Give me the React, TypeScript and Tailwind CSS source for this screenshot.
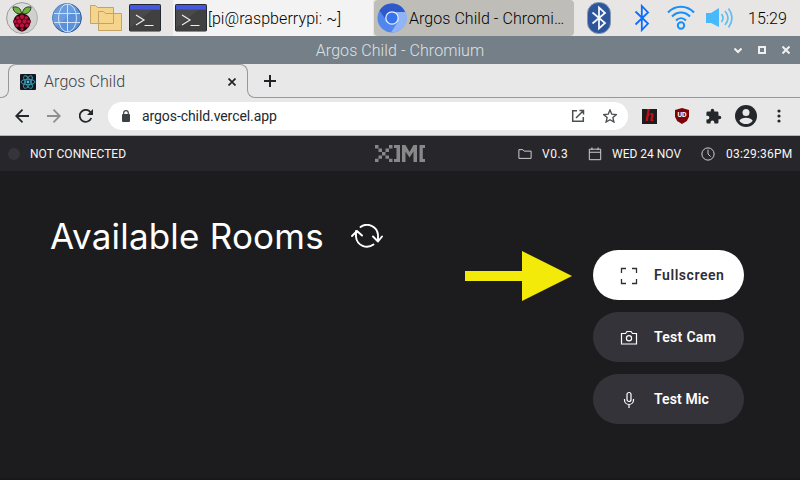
import type { ReactNode } from "react";

function Raspberry() {
  const drupes: [number, number, number][] = [
    [16, 14.8, 2.5], [11.8, 16, 2.1], [20.2, 16, 2.1], [9.4, 19.6, 2], [22.6, 19.6, 2],
    [13.4, 19.4, 2.5], [18.6, 19.4, 2.5], [11, 23.4, 2.1], [21, 23.4, 2.1], [16, 23.6, 2.5], [16, 27.3, 1.7],
  ];
  return (
    <svg className="block size-8" viewBox="0 0 32 32">
      <circle cx="16" cy="16" r="15.4" fill="#dcdddd" stroke="#999b9b" />
      <path d="M27 5A15 15 0 0 1 6 27Z" fill="#c6c8c8" opacity=".6" />
      <path d="M15.600 11.800C10.500 12.500 7 9.500 7 5c4.500-.5 8 .8 8.600 6.800M16.400 11.800C21.500 12.500 25 9.500 25 5c-4.500-.5-8 .8-8.600 6.800" fill="#6cb33e" stroke="#1b2a12" strokeWidth=".9" />
      <path d="M16 11.500c5 0 8.500 4 8.500 8S20 29.500 16 29.500 7.500 23.500 7.500 19.500s3.500-8 8.500-8" fill="#200609" />
      {drupes.map(([x, y, r]) => <circle key={`${x}-${y}`} cx={x} cy={y} r={r} fill="#c01040" stroke="#31040f" strokeWidth=".5" />)}
    </svg>
  );
}

function Globe() {
  return (
    <svg className="block size-[30px]" viewBox="0 0 30 30">
      <circle cx="15" cy="15" r="14.400" fill="#5b91d8" stroke="#315c91" />
      <path d="M4 24 25 5A14 14 0 0 0 4 24" fill="#77a5e2" opacity=".6" />
      <g fill="none" stroke="#d2e0f3" strokeWidth="1">
        <path d="M15.500 1v28M2 10.500h26M2 19.500h26" />
        <ellipse cx="15.500" cy="15" rx="9" ry="14" />
      </g>
    </svg>
  );
}

function Folders() {
  return (
    <svg className="block h-7 w-8" viewBox="0 0 32 28" fill="#f4d58b" stroke="#c5a367">
      <path d="M.5 1.500h5l2 2h16v16H.5zM8.500 7.500h5l2 2h16v17h-23z" />
    </svg>
  );
}

function Terminal() {
  return (
    <svg className="block h-7 w-8" viewBox="0 0 32 28">
      <rect x=".5" y=".5" width="31" height="26.500" rx=".8" fill="#4a4a4a" stroke="#242832" />
      <path d="M1 27V24L23 6h8v21z" fill="#404040" />
      <path d="M1 1h30v4.500H1z" fill="#4458df" />
      <path d="m7 11 8 5-8 5M15.500 21.500h9" fill="none" stroke="#eee" strokeWidth="1.200" />
    </svg>
  );
}

function Chromium() {
  return (
    <svg className="block size-[30px]" viewBox="0 0 30 30">
      <circle cx="15" cy="15" r="14.500" fill="#5086ed" />
      <path d="M2.500 7.500A14.500 14.500 0 0 1 28.500 10H15l-6 7z" fill="#3059c8" />
      <path d="M15 9h13.500A14.500 14.500 0 0 1 14 29.500l7-11z" fill="#91b3f8" />
      <circle cx="15" cy="15" r="6.200" fill="#3873eb" stroke="#e9f0ff" strokeWidth="1.300" />
    </svg>
  );
}

const RUNE = "M1.500 7.500 14 19.500 7.800 26V2L14 8.500 1.500 20.500";

function Bluetooth() {
  return <svg className="block h-7 w-4" viewBox="0 0 16 28"><path d={RUNE} fill="none" stroke="#0b6cff" strokeWidth="1.800" /></svg>;
}

function BluetoothBadge() {
  return (
    <svg className="block h-8 w-6" viewBox="0 0 24 32">
      <rect x=".5" y=".5" width="23" height="31" rx="11" fill="#2d559b" stroke="#8795ad" />
      <path d="M5.500 10.500 18 21l-6 5.500v-21L18 11 5.500 21.500" fill="none" stroke="#f4f6fa" strokeWidth="1.800" />
    </svg>
  );
}

function Wifi() {
  return (
    <svg className="block h-[26px] w-7" viewBox="0 0 28 26" fill="none" stroke="#168ffb" strokeWidth="2">
      <path d="M1 7.500C8-.3 20-.3 27 7.500M5 11.500c5-5.500 13-5.500 18 0M9 15.500c3-3 7-3 10 0" />
      <circle cx="14" cy="20.500" r="3.200" />
    </svg>
  );
}

function Volume() {
  return (
    <svg className="block h-6 w-[27px]" viewBox="0 0 27 24">
      <path d="M0 7h5l8-5v19l-8-4H0z" fill="#48b9fa" />
      <path d="M15.500 8q3 4 0 8M19 5q6 7 0 14M22.500 2.500q7 9.500 0 19" fill="none" stroke="#5cc0f6" strokeWidth="1.700" />
    </svg>
  );
}

function ReactMark() {
  return (
    <svg className="block size-4" viewBox="0 0 16 16">
      <rect width="16" height="16" rx="1" fill="#15181c" />
      <g fill="none" stroke="#3ba1bd" strokeWidth=".9">
        <ellipse cx="8" cy="8" rx="7" ry="2.700" />
        <ellipse cx="8" cy="8" rx="7" ry="2.700" transform="rotate(60 8 8)" />
        <ellipse cx="8" cy="8" rx="7" ry="2.700" transform="rotate(120 8 8)" />
      </g>
      <circle cx="8" cy="8" r="1.400" fill="#48c0df" />
    </svg>
  );
}

/* The logo is a bitmap mark drawn on a coarse cell grid. */
function Logo() {
  return (
    <svg className="block h-[17px] w-[50px]" viewBox="0 0 50 17" fill="#88888b">
      <path d="M0 0h3.500v3.500H0zM14 0h3.500v3.500H14zM3.500 3.500H7V7H3.500zM10.500 3.500H14V7h-3.500zM7 7h3.500v3.500H7zM3.500 10.500H7v3.300H3.500zM10.500 10.500H14v3.300h-3.500zM0 13.800h3.500V17H0zM14 13.800h3.500V17H14z" />
      <path d="M19 0h6v17h-6v-3h2.500V3H19zM27 0h3.500l4 7 4-7H42v17h-3.500V6.500l-4 6-4-6V17H27zM44.500 0H50v3h-2.200v11H50v3h-5.500z" />
    </svg>
  );
}

function Line({ size, children, w = 1.1 }: { size: string; children: ReactNode; w?: number }) {
  return <svg className={`block shrink-0 ${size}`} viewBox="0 0 16 16" fill="none" stroke="currentColor" strokeWidth={w}>{children}</svg>;
}

function TaskBar() {
  return (
    <div className="flex h-9 items-center bg-[#e8e6e4] font-['Roboto',sans-serif] text-[16px] font-light text-black">
      <div className="ml-1.5"><Raspberry /></div>
      <div className="ml-3.5"><Globe /></div>
      <div className="ml-2"><Folders /></div>
      <div className="ml-[7px]"><Terminal /></div>
      <div className="ml-3 flex h-9 w-[200px] items-center gap-px bg-[#f3f3f3] pl-0.5">
        <Terminal />
        <span className="mt-0.5 whitespace-nowrap tracking-[0.07px]">[pi@raspberrypi: ~]</span>
      </div>
      <div className="ml-px flex h-9 w-[200px] items-center gap-0.5 rounded-sm bg-[#bfbdb8] pl-[3px]">
        <Chromium />
        <span className="mt-0.5 whitespace-nowrap tracking-[0.05px]">Argos Child - Chromi…</span>
      </div>
      <div className="ml-[13px]"><BluetoothBadge /></div>
      <div className="ml-[23px]"><Bluetooth /></div>
      <div className="ml-[17px]"><Wifi /></div>
      <div className="ml-[11px]"><Volume /></div>
      <span className="mt-0.5 ml-[15px]">15:29</span>
    </div>
  );
}

function TitleBar() {
  return (
    <div className="grid h-7 grid-cols-[1fr_auto_1fr] items-center bg-[#747f88] font-['Roboto',sans-serif] text-[16px] font-light text-[#dfe2e4]">
      <span />
      <span className="mt-0.5 tracking-[0.07px]">Argos Child - Chromium</span>
      <div className="flex items-center justify-end gap-4 pr-2.5 text-[#f0f0f0]">
        <svg className="size-2" viewBox="0 0 8 8" fill="none" stroke="currentColor" strokeWidth="2"><path d="m.5 2.500 3.500 3.500 3.500-3.500" /></svg>
        <svg className="size-2" viewBox="0 0 8 8" fill="none" stroke="currentColor" strokeWidth="2"><path d="M1 1h6v6H1z" /></svg>
        <svg className="size-2" viewBox="0 0 8 8" fill="none" stroke="currentColor" strokeWidth="2"><path d="m.5.5 7 7m0-7-7 7" /></svg>
      </div>
    </div>
  );
}

function TabStrip() {
  return (
    <div className="flex h-[34px] bg-[#e8e8e8] text-[#202428]">
      <div className="h-[17px] w-[9px] shrink-0 self-end rounded-br-lg border-r border-b border-[#96989a]" />
      <div className="-ml-px h-[34px] w-60">
        <div className="flex h-[26px] items-center rounded-t-lg border-x border-t border-[#96989a] pl-[11px] pr-[11px] pt-2">
          <ReactMark />
          <span className="ml-2 flex-1 font-['Roboto',sans-serif] text-[16px] font-light tracking-[0.07px] text-[#3c4043]">Argos Child</span>
          <svg className="size-2" viewBox="0 0 8 8" fill="none" stroke="currentColor" strokeWidth="1.700"><path d="m.5.5 7 7m0-7-7 7" /></svg>
        </div>
      </div>
      <div className="-ml-px h-[17px] w-2.5 shrink-0 self-end rounded-bl-lg border-b border-l border-[#96989a]" />
      <div className="flex flex-1 items-center border-b border-[#96989a] pl-[7px]">
        <svg className="size-3" viewBox="0 0 12 12" stroke="currentColor" strokeWidth="2"><path d="M6 0v12M0 6h12" /></svg>
      </div>
    </div>
  );
}

function ToolBar() {
  return (
    <div className="flex h-[38px] items-center border-b border-[#b4b4b4] bg-[#e8e8e8] pb-px text-[#24282c]">
      <svg className="ml-[15px] size-3.5" viewBox="0 0 14 14" fill="none" stroke="currentColor" strokeWidth="1.800"><path d="M14 7H1.500M7.500.7 1.200 7l6.300 6.300" /></svg>
      <svg className="ml-[18px] size-3.5 text-[#8d8f91]" viewBox="0 0 14 14" fill="none" stroke="currentColor" strokeWidth="1.800"><path d="M0 7h12.500M6.500.7 12.800 7l-6.300 6.300" /></svg>
      <svg className="ml-[18px] size-3.5" viewBox="0 0 14 14" fill="none" stroke="currentColor" strokeWidth="1.800"><path d="M12.300 9A6 6 0 1 1 11.500 3.200" /><path d="M14 0v6H8z" fill="currentColor" stroke="none" /></svg>
      <div className="ml-[15px] flex h-7 w-[520px] items-center rounded-full bg-white">
        <svg className="ml-3.5 h-3 w-2" viewBox="0 0 8 12"><rect y="4" width="8" height="8" rx="1" fill="#3c4043" /><path d="M1.700 5V3a2.300 2.300 0 0 1 4.600 0v2" fill="none" stroke="#3c4043" strokeWidth="1.200" /></svg>
        <span className="ml-3 flex-1 font-['Roboto',sans-serif] text-[14px] tracking-[-0.08px]">argos-child.vercel.app</span>
        <svg className="size-3.5 text-[#4c5054]" viewBox="0 0 14 14" fill="none" stroke="currentColor" strokeWidth="1.500"><path d="M6 1.700H1.700v10.600h10.600V8M8.500 1.500h4v4M12.300 1.700 5 9" /></svg>
        <svg className="ml-[18px] mr-[11px] size-3.5 text-[#4c5054]" viewBox="0 0 14 14" fill="none" stroke="currentColor" strokeWidth="1.400"><path d="m7 1 1.800 4.200 4.500.4-3.400 3 1 4.400L7 10.700 3.100 13l1-4.400-3.400-3 4.500-.4z" /></svg>
      </div>
      <span className="ml-3.5 flex h-[15px] w-[15px] items-center justify-center bg-[#1e1d1e] font-['Liberation_Serif',serif] text-[16px] leading-none font-bold text-[#c40d18] italic">h</span>
      <span className="ml-[18px] flex h-4 w-3.5 items-center justify-center bg-[#7c0408] pb-0.5 font-['Roboto',sans-serif] text-[7px] font-bold text-white [clip-path:polygon(50%_0,100%_12%,100%_55%,85%_82%,50%_100%,15%_82%,0_55%,0_12%)]">UD</span>
      <svg className="ml-4 size-[17px]" viewBox="0 0 24 24" fill="currentColor"><path d="M20.500 11H19V7a2 2 0 0 0-2-2h-4V3.500a2.500 2.500 0 0 0-5 0V5H4a2 2 0 0 0-2 2v3.800h1.500a2.700 2.700 0 0 1 0 5.400H2V20a2 2 0 0 0 2 2h3.800v-1.500a2.700 2.700 0 0 1 5.400 0V22H17a2 2 0 0 0 2-2v-4h1.500a2.500 2.500 0 0 0 0-5" /></svg>
      <svg className="ml-[13px] size-[22px]" viewBox="0 0 22 22"><circle cx="11" cy="11" r="11" fill="#24282c" /><circle cx="11" cy="7.500" r="3.500" fill="#e8e8e8" /><path d="M4.300 15.800c2-4 11.400-4 13.400 0a8.500 8.500 0 0 1-13.400 0" fill="#e8e8e8" /></svg>
      <svg className="ml-5 h-[14px] w-1" viewBox="0 0 4 14" fill="currentColor"><circle cx="2" cy="2" r="1.600" /><circle cx="2" cy="7" r="1.600" /><circle cx="2" cy="12" r="1.600" /></svg>
    </div>
  );
}

function StatusBar() {
  return (
    <div className="flex h-[35px] items-center bg-[#27262b] font-['Roboto',sans-serif] text-[12px] text-[#f7f7f8]">
      <span className="ml-2 size-3 rounded-full bg-[#35343a]" />
      <span className="ml-2.5 w-[335px]">NOT CONNECTED</span>
      <div className="ml-2.5"><Logo /></div>
      <div className="ml-[93px] text-[#d4d4d6]"><Line size="size-3.5"><path d="M1 3h4.500L7 4.700h8V13H1z" /></Line></div>
      <span className="ml-2.5 w-[25px] whitespace-nowrap tracking-[0.5px]">V0.3</span>
      <div className="ml-[21px] text-[#d4d4d6]"><Line size="size-3.5"><path d="M1.500 2.500h13v12h-13zM1.500 6h13M4.500.5v3m7-3v3" /></Line></div>
      <span className="ml-2.5 w-[69px] whitespace-nowrap">WED 24 NOV</span>
      <div className="ml-5 text-[#d4d4d6]"><Line size="size-3.5"><circle cx="8" cy="8" r="7" /><path d="M8 3v5l3 3" /></Line></div>
      <span className="ml-[11px] whitespace-nowrap tracking-[0.2px]">03:29:36PM</span>
    </div>
  );
}

function Action({ label, icon, spacing, primary = false }: { label: string; icon: ReactNode; spacing: string; primary?: boolean }) {
  return (
    <button className={`flex h-[50px] w-[151px] items-center rounded-full pl-[27px] text-left font-['Roboto',sans-serif] text-[14px] font-semibold ${primary ? "bg-white text-[#302f35]" : "bg-[#343339] text-white"}`}>
      <span className="mt-0.5">{icon}</span>
      <span className={`ml-4 whitespace-nowrap ${spacing}`}>{label}</span>
    </button>
  );
}

function Rooms() {
  return (
    <div className="flex h-[309px] border-b-2 border-[#1a1517] bg-[#1c1c1e] text-white">
      <div className="flex w-[415px] shrink-0 items-center self-start pt-[41px] pl-[50px]">
        <h1 className="w-[301px] font-['Inter',sans-serif] text-[35px] leading-[48px] tracking-[0.2px] whitespace-nowrap">Available Rooms</h1>
        <svg className="block h-6 w-8" viewBox="0 0 32 24" fill="none" stroke="currentColor" strokeWidth="1.900" strokeLinecap="round" strokeLinejoin="round">
          <path d="M9.500 3A11 11 0 0 1 27 11v6M22 12.500l5 5 4-5M22.500 20.500A11 11 0 0 1 5 13V7M1 12l5-5 5 4.500" />
        </svg>
      </div>
      <svg className="mt-20 ml-[50px] block h-[50px] w-[107px]" viewBox="0 0 107 50" fill="#f4ea0a"><path d="M0 20h57V0l50 25-50 25V30H0z" /></svg>
      <div className="mt-[79px] ml-[21px] flex flex-col gap-3">
        <Action primary label="Fullscreen" spacing="tracking-[0.55px]" icon={<svg className="block size-[18px]" viewBox="0 0 18 18" fill="none" stroke="currentColor" strokeWidth="1.300"><path d="M1.500 6V1.500H6M12 1.500h4.500V6M16.500 12v4.500H12M6 16.500H1.500V12" /></svg>} />
        <Action label="Test Cam" spacing="tracking-[0.3px]" icon={<svg className="block size-[18px]" viewBox="0 0 18 18" fill="none" stroke="currentColor" strokeWidth="1.200"><path d="M1.500 4.500h4l1.500-2h4l1.500 2h4v10.500h-15z" /><circle cx="9" cy="9.300" r="2.600" /></svg>} />
        <Action label="Test Mic" spacing="tracking-[0.12px]" icon={<svg className="block size-[18px]" viewBox="0 0 18 18" fill="none" stroke="currentColor" strokeWidth="1.200"><rect x="7" y="1.500" width="4" height="9" rx="2" /><path d="M4.500 8v1a4.500 4.500 0 0 0 9 0V8M9 13.500V17" /></svg>} />
      </div>
    </div>
  );
}

export default function App() {
  return (
    <div className="h-[480px] w-[800px] overflow-hidden">
      <TaskBar />
      <TitleBar />
      <TabStrip />
      <ToolBar />
      <StatusBar />
      <Rooms />
    </div>
  );
}
